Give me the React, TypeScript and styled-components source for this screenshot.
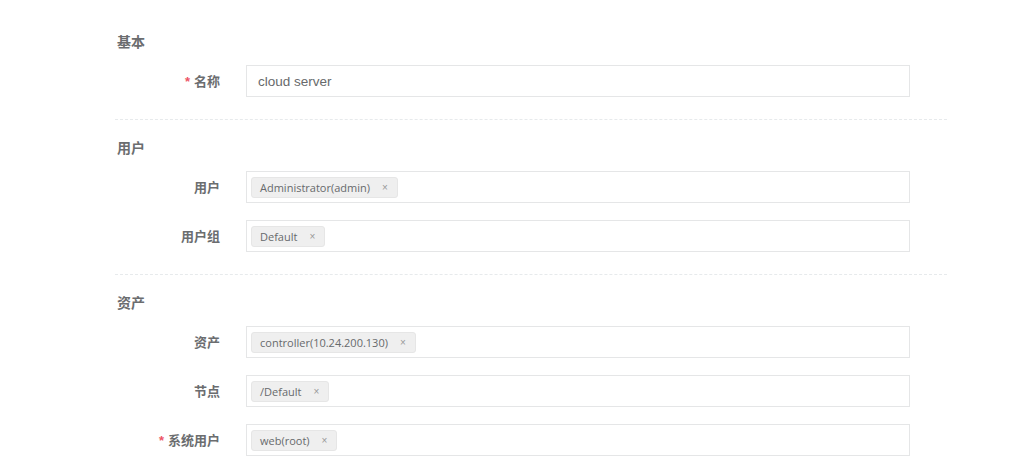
import React from "react";
import styled, { createGlobalStyle } from "styled-components";

const Global = createGlobalStyle`
  html, body { margin: 0; padding: 0; background: #ffffff; }
  body {
    font-family: "Open Sans", "Noto Sans CJK SC", sans-serif;
    color: #676a6c;
  }
`;

const Page = styled.div`
  padding: 31px 0 0 115px;
  width: 832px;
`;

const Section = styled.section`
  display: flex;
  flex-direction: column;
`;

const SectionTitle = styled.h3`
  margin: 0 0 14px 2px;
  font-size: 14px;
  line-height: 20px;
  font-weight: 700;
  color: #6b6d6f;
  font-family: "Noto Sans CJK SC", sans-serif;
`;

const Rows = styled.div`
  display: flex;
  flex-direction: column;
  gap: 17px;
`;

const Row = styled.div`
  display: grid;
  grid-template-columns: 105px 664px;
  column-gap: 26px;
  align-items: center;
`;

const Label = styled.label`
  text-align: right;
  font-size: 13px;
  font-weight: 700;
  color: #6b6d6f;
  font-family: "Noto Sans CJK SC", sans-serif;
  line-height: 20px;
`;

const Star = styled.span`
  color: #ed5565;
  margin-right: 4px;
  font-family: "Liberation Sans", sans-serif;
`;

const TextInput = styled.div`
  box-sizing: border-box;
  height: 32px;
  border: 1px solid #e5e6e7;
  padding: 0 11px;
  display: flex;
  align-items: center;
  font-family: "Liberation Sans", Arial, sans-serif;
  font-size: 13.5px;
  color: #676a6c;
`;

const MultiSelect = styled.div`
  box-sizing: border-box;
  height: 32px;
  border: 1px solid #e5e6e7;
  padding: 0 4px;
  display: flex;
  align-items: center;
  gap: 5px;
`;

const Tag = styled.span`
  box-sizing: border-box;
  height: 21px;
  display: inline-flex;
  align-items: center;
  padding: 0 9px 0 8px;
  background: #efefef;
  border: 1px solid #e6e6e6;
  border-radius: 3px;
  font-family: "Open Sans", sans-serif;
  font-size: 11px;
  color: #676a6c;
`;

const Remove = styled.span`
  margin-left: 12px;
  color: #999999;
  font-size: 10px;
  font-family: "Liberation Sans", sans-serif;
`;

const Divider = styled.hr`
  margin: 22px 0 17px 0;
  border: 0;
  border-top: 1px dashed #e7eaec;
  height: 0;
  width: 832px;
`;

type Field = { label: string; required?: boolean; value?: string; tags?: string[] };

const sections: { title: string; fields: Field[] }[] = [
  { title: "基本", fields: [{ label: "名称", required: true, value: "cloud server" }] },
  {
    title: "用户",
    fields: [
      { label: "用户", tags: ["Administrator(admin)"] },
      { label: "用户组", tags: ["Default"] },
    ],
  },
  {
    title: "资产",
    fields: [
      { label: "资产", tags: ["controller(10.24.200.130)"] },
      { label: "节点", tags: ["/Default"] },
      { label: "系统用户", required: true, tags: ["web(root)"] },
    ],
  },
];

export default function App() {
  return (
    <>
      <Global />
      <Page>
        {sections.map((s, i) => (
          <Section key={s.title}>
            <SectionTitle>{s.title}</SectionTitle>
            <Rows>
              {s.fields.map((f) => (
                <Row key={f.label}>
                  <Label>
                    {f.required && <Star>*</Star>}
                    {f.label}
                  </Label>
                  {f.tags ? (
                    <MultiSelect>
                      {f.tags.map((t) => (
                        <Tag key={t}>
                          {t}
                          <Remove>×</Remove>
                        </Tag>
                      ))}
                    </MultiSelect>
                  ) : (
                    <TextInput>{f.value}</TextInput>
                  )}
                </Row>
              ))}
            </Rows>
            {i < sections.length - 1 && <Divider />}
          </Section>
        ))}
      </Page>
    </>
  );
}
